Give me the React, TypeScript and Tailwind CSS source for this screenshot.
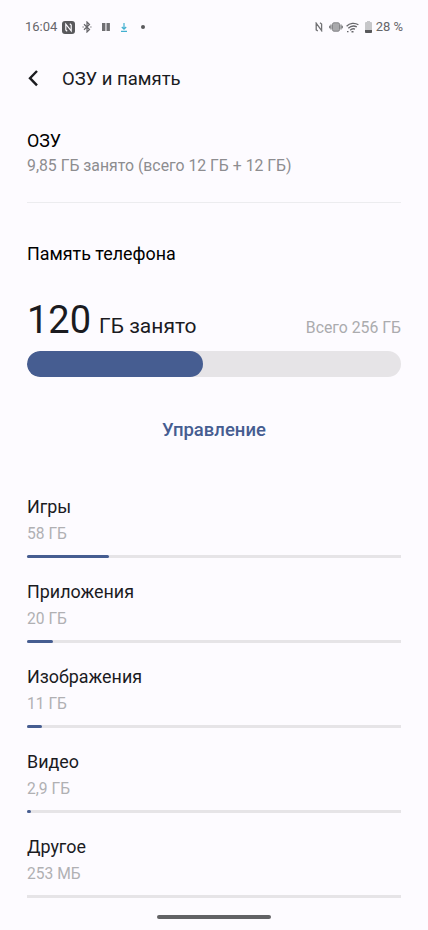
const categories = [
  { name: "Игры", size: "58 ГБ", used: 82 },
  { name: "Приложения", size: "20 ГБ", used: 26 },
  { name: "Изображения", size: "11 ГБ", used: 15 },
  { name: "Видео", size: "2,9 ГБ", used: 4 },
  { name: "Другое", size: "253 МБ", used: 0 },
];

const TRACK_WIDTH = 374;

const StatusBar = () => {
  return (
    <div className="flex h-[54px] items-center justify-between px-[25px] text-[13px] text-[#66666a]">
      <div className="flex items-center">
        <span className="w-[37px] whitespace-nowrap">16:04</span>
        <svg className="h-[13px] w-[13px]" viewBox="0 0 13 13" fill="none">
          <rect width="13" height="13" rx="3" fill="#59595c" />
          <path d="M5.2 10.2L3.8 9V3.2L9.2 9.8V4L7.8 2.8" stroke="#fdfbff" strokeWidth="1.2" />
        </svg>
        <svg className="ml-[7px] h-3 w-[10px]" viewBox="0 0 10 12" fill="none" stroke="#66666a" strokeWidth="1.2">
          <path d="M2 3.2L7.5 8.5L5 11V1L7.5 3.5L2 8.8" />
          <path d="M.5 6h1.2M8.3 6h1.2" />
        </svg>
        <svg className="ml-[10px] h-2 w-2" viewBox="0 0 8 8" fill="#6f6f72">
          <rect width="3.4" height="8" />
          <rect x="4.5" width="3.4" height="8" />
        </svg>
        <svg className="ml-[10px] h-[9px] w-[8px]" viewBox="0 0 8 9" fill="none" stroke="#42b0d0">
          <path d="M4 0v6M1.8 4L4 6.2L6.2 4M1 8.4h6" strokeWidth="1.2" />
        </svg>
        <span className="ml-[13px] h-1 w-1 rounded-full bg-[#59595c]" />
      </div>
      <div className="flex items-center">
        <svg className="h-[10px] w-[8px]" viewBox="0 0 8 10" fill="none" stroke="#717174" strokeWidth="1.3">
          <path d="M2.8 9L1.2 7.8V1.2L6.6 8.6V2L5 .8" />
        </svg>
        <svg className="ml-[6px] h-[10px] w-[14px]" viewBox="0 0 14 10" fill="none" stroke="#858588">
          <rect x="3.5" y=".8" width="7" height="8.4" rx="1.5" fill="#a9a9ac" />
          <path d="M2 2.5v5M12 2.5v5M.6 3.8v2.4M13.4 3.8v2.4" strokeWidth="1.3" />
        </svg>
        <svg className="ml-[3px] h-[11px] w-[13px]" viewBox="0 0 13 11" fill="none" stroke="#66666a" strokeWidth="1.3">
          <path d="M.6 4.2C3.8.8 8.8.5 12.4 2.7M2.3 6.3C4.8 3.8 8 3.5 10.8 4.8M4.2 8.2C5.7 6.7 7.4 6.5 9 7.1" />
          <path d="M1 9.6h1.5M5.5 9.8h2" strokeWidth="1.4" />
        </svg>
        <svg className="ml-[6px] h-[12px] w-[7px]" viewBox="0 0 7 12">
          <path d="M2 0h3v1h1q1 0 1 1v9q0 1-1 1H1q-1 0-1-1V2q0-1 1-1h1z" fill="#c7c7ca" />
          <path d="M0 9h7v2q0 1-1 1H1q-1 0-1-1z" fill="#58585b" />
        </svg>
        <span className="ml-[4px] whitespace-nowrap">28 %</span>
      </div>
    </div>
  );
};

const App = () => {
  return (
    <div className="flex h-[930px] w-[428px] flex-col overflow-hidden bg-[#fdfbff] font-['Roboto',sans-serif] text-[#1b1b1f]">
      <StatusBar />

      {/* Header */}
      <header className="flex h-12 items-center pl-[27px]">
        <svg className="h-[18px] w-3" viewBox="0 0 12 18" fill="none" stroke="#1b1b1f" strokeWidth="2.4">
          <path d="M10 2L3 9.2L10 16.4" />
        </svg>
        <h1 className="ml-[23px] pt-px text-[18.5px] leading-6">ОЗУ и память</h1>
      </header>

      <main className="px-[27px]">
        {/* RAM */}
        <section className="h-[101px] border-b border-[#ececef] pt-[27px]">
          <h2 className="text-[17.9px] leading-6 text-black">ОЗУ</h2>
          <p className="mt-px text-[15.8px] leading-6 text-[#8d8d90]">9,85 ГБ занято (всего 12 ГБ + 12 ГБ)</p>
        </section>

        {/* Phone storage */}
        <section className="pt-[39px]">
          <h2 className="text-[17.9px] leading-6 text-black">Память телефона</h2>
          <div className="mt-[30px] flex h-12 items-baseline whitespace-nowrap">
            <span className="text-[38px] leading-12">120</span>
            <span className="ml-[8px] text-[21px]">ГБ занято</span>
            <span className="ml-auto text-[15.8px] text-[#ababae]">Всего 256 ГБ</span>
          </div>
          <div className="mt-[7px] h-[26px] overflow-hidden rounded-full bg-[#e6e4e7]">
            <div className="h-full w-[176px] rounded-full bg-[#465d91]" />
          </div>
          <button className="mx-auto mt-[41px] block text-[18.5px] leading-6 font-medium text-[#465d91]">Управление</button>
        </section>

        {/* Usage by category */}
        <ul className="mt-[40px]">
          {categories.map((category) => (
            <li key={category.name} className="h-[85px] pt-[13px]">
              <p className="text-[17.9px] leading-6">{category.name}</p>
              <p className="mt-[3px] text-[15.6px] leading-6 text-[#b0b0b3]">{category.size}</p>
              <div className="mt-[9px] h-[3px] bg-[#e6e4e7]">
                <div
                  className="h-full rounded-full bg-[#465d91]"
                  style={{ width: `${(category.used / TRACK_WIDTH) * 100}%` }}
                />
              </div>
            </li>
          ))}
        </ul>
      </main>

      {/* Gesture bar */}
      <div className="mx-auto mt-auto mb-[11px] h-1 w-[114px] shrink-0 rounded-full bg-[#626265]" />
    </div>
  );
};

export default App;
